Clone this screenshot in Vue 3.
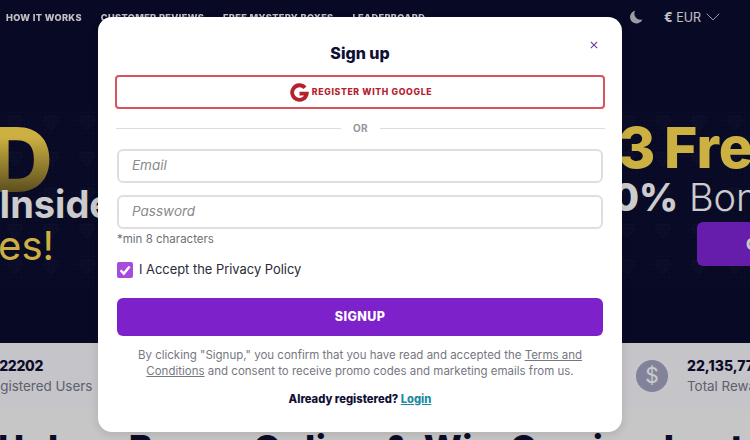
<script setup>
const navLinks = ['How it works', 'Customer reviews', 'Free mystery boxes', 'Leaderboard']
</script>

<template>
  <div class="page">
    <header class="topbar">
      <nav class="nav-links">
        <a v-for="link in navLinks" :key="link" class="nav-link">{{ link }}</a>
      </nav>
      <div class="nav-right">
        <svg class="moon" viewBox="0 0 14 14" width="14" height="14">
          <path d="M6.2 .8A6.4 6.4 0 1 0 13.4 9.4 6 6 0 0 1 6.2 .8Z" fill="#c4c4cc" />
        </svg>
        <span class="currency"><span class="euro">€</span> EUR</span>
        <svg class="chevron" viewBox="0 0 14 8" width="14" height="8">
          <path d="M.7 .7 7 6.9 13.3 .7" fill="none" stroke="#c4c4cc" stroke-width="1" />
        </svg>
      </div>
    </header>

    <section class="hero">
      <svg class="hero-pattern" width="750" height="180">
        <defs>
          <pattern id="grid" width="4" height="4" patternUnits="userSpaceOnUse">
            <path d="M4 0H0V4" fill="none" stroke="rgba(255,255,255,0.012)" stroke-width="1" />
          </pattern>
          <pattern id="diamonds" width="36" height="36" patternUnits="userSpaceOnUse">
            <path d="M10 8h10l3 4-8 10-8-10Z" fill="rgba(255,255,255,0.012)" stroke="rgba(255,255,255,0.016)" />
          </pattern>
        </defs>
        <rect width="750" height="180" fill="url(#grid)" />
        <rect width="750" height="180" fill="url(#diamonds)" />
      </svg>
      <div class="hero-left">
        <div class="big-gold">GOLD</div>
        <div class="inside">Prizes Inside</div>
        <div class="thin-gold">Boxes!</div>
      </div>
      <div class="hero-right">
        <div class="free">3 Free</div>
        <div class="bonus"><b>50%</b> Bonus</div>
        <a class="hero-btn">OPEN</a>
      </div>
    </section>

    <section class="stats">
      <div class="stat stat-left">
        <div class="stat-value">1422202</div>
        <div class="stat-label">Registered Users</div>
      </div>
      <div class="stat stat-right">
        <span class="dollar">$</span>
        <div>
          <div class="stat-value">22,135,777</div>
          <div class="stat-label">Total Rewards</div>
        </div>
      </div>
    </section>

    <h2 class="headline">Unbox Boxes Online &amp; Win Gaming Loot</h2>

    <div class="backdrop"></div>

    <div class="modal">
      <button class="close" aria-label="Close">
        <svg viewBox="0 0 8 8" width="8" height="8">
          <path d="M.8 .8 7.2 7.2M7.2 .8 .8 7.2" stroke="#6a3d9a" stroke-width="1.1" />
        </svg>
      </button>
      <h1 class="title">Sign up</h1>
      <button class="google-btn">
        <svg viewBox="0 0 20 20" width="19" height="19">
          <path d="M15.8 5A7.7 7.7 0 1 0 17.6 11.2H10" fill="none" stroke="#b5222f" stroke-width="4" />
        </svg>
        <span>Register with Google</span>
      </button>
      <div class="or-row"><span class="or-line"></span><span class="or">OR</span><span class="or-line"></span></div>
      <div class="fields">
        <input class="field" type="text" placeholder="Email" />
        <input class="field" type="password" placeholder="Password" />
      </div>
      <div class="hint">*min 8 characters</div>
      <label class="accept">
        <span class="checkbox">
          <svg viewBox="0 0 16 16" width="16" height="16">
            <path d="M3.6 8.2 6.8 11.6 12.6 4.6" fill="none" stroke="#fff" stroke-width="2.4" />
          </svg>
        </span>
        I Accept the Privacy Policy
      </label>
      <button class="signup">SIGNUP</button>
      <p class="terms">By clicking "Signup," you confirm that you have read and accepted the <u>Terms and Conditions</u> and consent to receive promo codes and marketing emails from us.</p>
      <p class="already">Already registered? <a class="login">Login</a></p>
    </div>
  </div>
</template>

<style>
html, body {
  margin: 0;
}
</style>

<style scoped>
.page {
  position: relative;
  width: 750px;
  height: 440px;
  overflow: hidden;
  background: #f8f8f8;
  font-family: Inter, "Liberation Sans", sans-serif;
}

/* Top nav */
.topbar {
  height: 34px;
  background: #0b0c2f;
  display: flex;
  justify-content: space-between;
  align-items: center;
  padding: 0 30px 0 6px;
}

.nav-links {
  display: flex;
  gap: 19px;
}

.nav-link {
  color: #fff;
  opacity: 0.95;
  font-size: 9.2px;
  font-weight: 800;
  letter-spacing: 0.35px;
  text-transform: uppercase;
}

.nav-right {
  display: flex;
  align-items: center;
  color: #f2f2f6;
  font-size: 12.5px;
}

.moon {
  margin-right: 21px;
}

.currency {
  margin-right: 5px;
}

.euro {
  font-weight: 800;
}

/* Hero */
.hero {
  position: relative;
  height: 309px;
  background: #0b0c2f;
  display: flex;
  justify-content: space-between;
  overflow: hidden;
}

.hero-pattern {
  position: absolute;
  left: 0;
  top: 74px;
}

.hero-left {
  position: relative;
  width: 112px;
  padding-top: 88px;
  display: flex;
  flex-direction: column;
  align-items: flex-end;
  white-space: nowrap;
  flex-shrink: 0;
}

.big-gold {
  margin-right: 59px;
  font-size: 90px;
  line-height: 76px;
  font-weight: 800;
  background: linear-gradient(#ffdc52 20%, #6e5e24 95%);
  -webkit-background-clip: text;
  background-clip: text;
  color: transparent;
}

.inside {
  margin-top: -16px;
  font-size: 38px;
  line-height: 44px;
  font-weight: 700;
  color: #fff;
}

.thin-gold {
  margin-right: 58px;
  margin-top: -1px;
  font-size: 40px;
  line-height: 42px;
  color: #ffdc52;
}

.hero-right {
  position: relative;
  width: 160px;
  padding-top: 86px;
  white-space: nowrap;
  flex-shrink: 0;
}

.free {
  padding-left: 28px;
  font-size: 57px;
  line-height: 56px;
  font-weight: 800;
  word-spacing: -4px;
  color: #ffdc52;
}

.bonus {
  margin-left: -2px;
  font-size: 38px;
  line-height: 42px;
  color: #fff;
  font-weight: 300;
}

.bonus b {
  font-weight: 800;
}

.hero-btn {
  display: block;
  width: 100px;
  height: 44px;
  margin: 4px 0 0 107px;
  padding-left: 49px;
  box-sizing: border-box;
  background: #8025d8;
  border-radius: 6px;
  color: #fff;
  font-size: 16px;
  font-weight: 800;
  line-height: 44px;
}

/* Stats */
.stats {
  height: 66px;
  background: #f6f6fc;
  display: flex;
  justify-content: space-between;
  align-items: center;
  overflow: hidden;
}

.stat-left {
  margin-left: -16px;
}

.stat-left .stat-value {
  letter-spacing: -0.3px;
}

.stat-right {
  display: flex;
  align-items: center;
  gap: 19px;
  width: 114px;
  flex-shrink: 0;
  white-space: nowrap;
}

.stat-value {
  font-size: 14px;
  font-weight: 800;
  color: #0f1035;
  line-height: 20px;
}

.stat-label {
  font-size: 13.4px;
  color: #77778a;
  line-height: 20px;
}

.dollar {
  flex: none;
  width: 32px;
  height: 32px;
  border-radius: 50%;
  background: #a3a4c2;
  color: #fff;
  font-size: 21px;
  line-height: 32px;
  text-align: center;
}

.headline {
  margin: 19px 0 0 -2px;
  width: 820px;
  white-space: nowrap;
  font-size: 36px;
  line-height: 40px;
  font-weight: 800;
  letter-spacing: 0.5px;
  word-spacing: 5px;
  color: #0f1035;
}

/* Overlay */
.backdrop {
  position: absolute;
  inset: 0;
  background: rgba(0, 0, 0, 0.2);
}

.modal {
  position: absolute;
  left: 98px;
  top: 17px;
  width: 524px;
  height: 415px;
  box-sizing: border-box;
  padding: 26px 19px 0 19px;
  background: #fff;
  border-radius: 14px;
  box-shadow: 0 2px 10px rgba(0, 0, 0, 0.12);
}

.close {
  position: absolute;
  top: 24px;
  right: 24px;
  padding: 0;
  border: 0;
  background: none;
  line-height: 0;
}

.title {
  margin: 0 0 12px;
  font-size: 16px;
  line-height: 20px;
  font-weight: 800;
  text-align: center;
  color: #0f1035;
}

.google-btn {
  display: flex;
  align-items: center;
  justify-content: center;
  gap: 3px;
  width: 490px;
  height: 34px;
  margin-left: -2px;
  padding-left: 8px;
  background: #fff;
  border: 2px solid #d9535f;
  border-radius: 4px;
  color: #b5222f;
  font-family: inherit;
  font-size: 8.7px;
  font-weight: 800;
  letter-spacing: 0.65px;
  text-transform: uppercase;
}

.or-row {
  display: flex;
  align-items: center;
  gap: 12px;
  height: 16px;
  margin: 11px -2px 13px -1px;
}

.or-line {
  flex: 1;
  height: 1px;
  background: #dcdcdc;
}

.or {
  font-size: 10px;
  font-weight: 700;
  color: #96969e;
  letter-spacing: 0.3px;
}

.fields {
  display: flex;
  flex-direction: column;
  gap: 12px;
}

.field {
  box-sizing: border-box;
  width: 486px;
  height: 34px;
  padding: 0 13px 2px;
  border: 2px solid #dedede;
  border-radius: 6px;
  font-family: inherit;
  font-size: 13.5px;
  outline: none;
}

.field::placeholder {
  color: #8a8a8e;
  font-style: italic;
}

.hint {
  margin-top: 3px;
  font-size: 11.5px;
  line-height: 15px;
  color: #6f6f76;
}

.accept {
  display: flex;
  align-items: center;
  gap: 6px;
  margin-top: 15px;
  font-size: 12.9px;
  line-height: 16px;
  color: #2b2b3a;
}

.checkbox {
  width: 16px;
  height: 16px;
  background: #a64bdc;
  border-radius: 2px;
  line-height: 0;
}

.signup {
  display: block;
  width: 486px;
  height: 38px;
  margin-top: 20px;
  padding-bottom: 3px;
  border: 0;
  border-radius: 6px;
  background: #7d22ca;
  color: #fff;
  font-family: inherit;
  font-size: 12.5px;
  font-weight: 800;
  letter-spacing: 0.4px;
}

.terms {
  width: 450px;
  margin: 11px 0 0 18px;
  font-size: 11.5px;
  line-height: 16px;
  text-align: center;
  color: #77777f;
}

.already {
  margin: 12px 0 0;
  font-size: 11.2px;
  line-height: 16px;
  font-weight: 800;
  text-align: center;
  color: #0f1035;
}

.login {
  color: #1c8ba0;
  text-decoration: underline;
}
</style>
